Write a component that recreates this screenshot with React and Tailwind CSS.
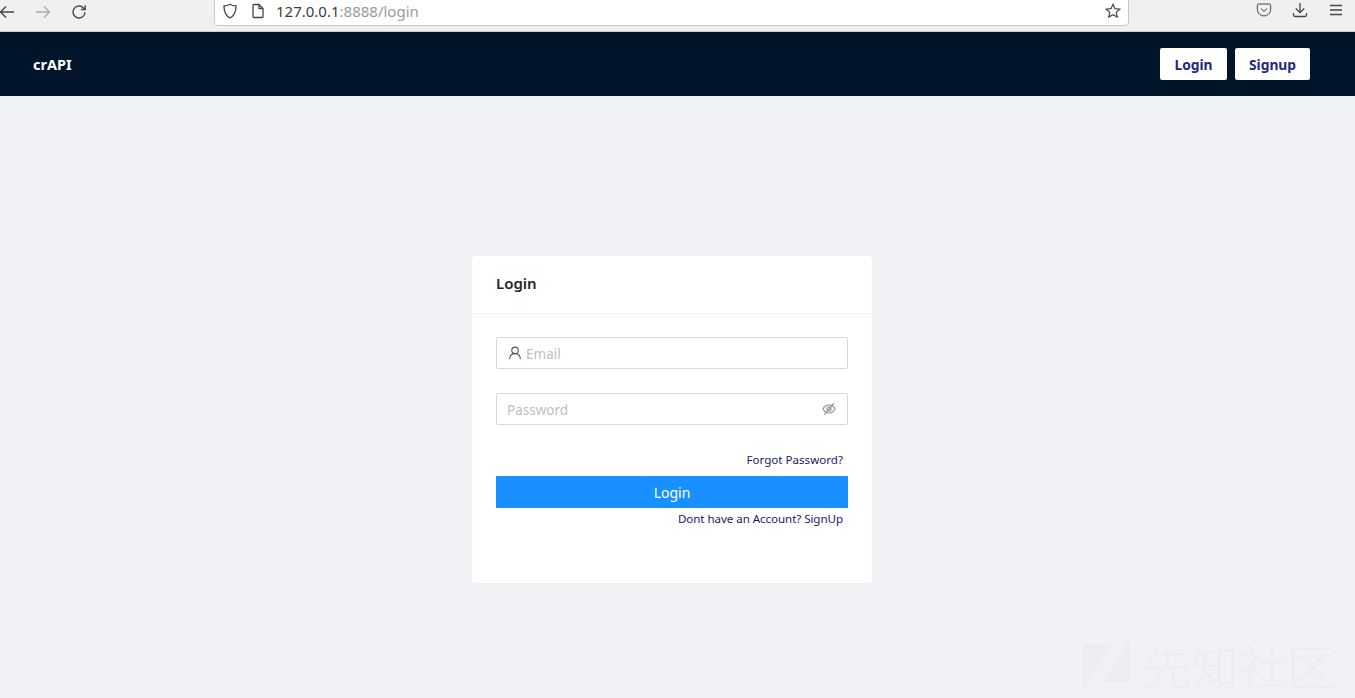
import { Pocket } from 'lucide-react';

const UI_FONT = "font-['Noto_Sans','Open_Sans',sans-serif]";

function BackIcon({ className }) {
  return (
    <svg viewBox="0 0 16 16" className={className} fill="none" stroke="currentColor" strokeWidth="1.3">
      <path d="M15 8H1.5M7 2.5 1.5 8 7 13.5" />
    </svg>
  );
}

function BrowserBar() {
  return (
    <div className="flex h-8 items-start overflow-hidden border-b border-[#cfcfcf] bg-[#f2f0ee]">
      <BackIcon className="ml-[-1px] mt-[4px] h-4 w-4 text-[#45454a]" />
      <BackIcon className="ml-[20px] mt-[4px] h-4 w-4 rotate-180 text-[#a9a9ab]" />
      <svg viewBox="0 0 16 16" className="ml-[20px] mt-[4px] h-4 w-4 text-[#45454a]" fill="none" stroke="currentColor" strokeWidth="1.4">
        <path d="M14 8.2A6 6 0 1 1 11.6 3.2L14 5.2" />
        <path d="M14.2 1.2v4.3H9.9" />
      </svg>
      <div className="ml-[127px] mt-[-6px] flex h-[32px] w-[915px] items-center rounded-[4px] border border-[#c9c9c9] bg-white pt-[2px]">
        <svg viewBox="0 0 16 16" className="ml-[7px] h-4 w-4 text-[#45454a]" fill="none" stroke="currentColor" strokeWidth="1.3">
          <path d="M8 1.2c2 1.2 4 1.6 6 1.7 0 6-1.6 9.7-6 11.9C3.6 12.600 2 8.900 2 2.900c2-.1 4-.5 6-1.700Z" />
        </svg>
        <svg viewBox="0 0 16 16" className="ml-[12px] h-4 w-4 text-[#45454a]" fill="none" stroke="currentColor" strokeWidth="1.3">
          <path d="M3 2.500a1 1 0 0 1 1-1h5l4 4v8a1 1 0 0 1-1 1H4a1 1 0 0 1-1-1Z" />
          <path d="M9 1.500v4h4" />
        </svg>
        <span className={`ml-[10px] text-[15px] leading-none text-[#9a9a9e] ${UI_FONT}`}>
          <span className="text-[#3c3c40]">127.0.0.1</span>:8888/login
        </span>
        <svg viewBox="0 0 16 16" className="ml-auto mr-[7px] h-4 w-4 text-[#45454a]" fill="none" stroke="currentColor" strokeWidth="1.2">
          <path d="M8 1.300 10 5.700l4.800.5-3.600 3.200 1 4.700L8 11.700l-4.200 2.400 1-4.700L1.200 6.200 6 5.700Z" />
        </svg>
      </div>
      <div className="ml-auto flex items-center pr-[11px] pt-[2px] text-[#45454a]">
        <Pocket className="h-4 w-4" strokeWidth={1.5} />
        <svg viewBox="0 0 16 16" className="ml-[20px] h-4 w-4" fill="none" stroke="currentColor" strokeWidth="1.3">
          <path d="M8 1v9.500M3.800 6.500 8 10.700l4.200-4.200M1.500 11v2a1.500 1.500 0 0 0 1.500 1.500h10a1.500 1.500 0 0 0 1.500-1.500v-2" />
        </svg>
        <svg viewBox="0 0 16 16" className="ml-[20px] h-4 w-4" fill="none" stroke="currentColor" strokeWidth="1.3">
          <path d="M2 3.500h12M2 8h12M2 12.500h12" />
        </svg>
      </div>
    </div>
  );
}

function NavBar() {
  return (
    <header className={`flex h-16 items-center justify-between bg-[#001529] pl-[33px] pr-[45px] ${UI_FONT}`}>
      <span className="pt-[2px] text-[14.5px] font-bold text-white">crAPI</span>
      <div className="flex gap-2">
        <button type="button" className="h-8 w-[67px] rounded-[2px] bg-white pt-[2px] text-[13.8px] font-bold text-[#232a7a]">Login</button>
        <button type="button" className="h-8 w-[75px] rounded-[2px] bg-white pt-[2px] text-[13.8px] font-bold text-[#232a7a]">Signup</button>
      </div>
    </header>
  );
}

function LoginCard() {
  return (
    <div className={`h-[327px] w-[400px] rounded-[4px] bg-white ${UI_FONT}`}>
      <div className="flex h-[58px] items-center border-b border-[#f0f0f0] px-6 pb-[2px] text-[15px] font-semibold text-[#262626]">
        Login
      </div>
      <div className="px-6 pt-[23px]">
        <div className="flex h-8 items-center rounded-[2px] border border-[#d9d9d9] pl-[11px] text-[13.5px] text-[#bfbfbf]">
          <svg viewBox="0 0 16 16" className="mr-[4px] h-[14px] w-[14px] text-[#555]" fill="none" stroke="currentColor" strokeWidth="1.200">
            <circle cx="8" cy="5" r="3.700" />
            <path d="M1.800 15c.3-3.800 2.800-6.300 6.200-6.300s5.900 2.500 6.200 6.300" />
          </svg>
          <span className="pt-[2px]">Email</span>
        </div>
        <div className="mt-6 flex h-8 items-center justify-between rounded-[2px] border border-[#d9d9d9] pl-[10px] pr-[11px] text-[13.5px] text-[#bfbfbf]">
          <span className="pt-[2px]">Password</span>
          <svg viewBox="0 0 16 16" className="h-[14px] w-[14px] text-[#8c8c8c]" fill="none" stroke="currentColor" strokeWidth="1.200">
            <path d="M1 8c1.800-3 4-4.500 7-4.500S13.200 5 15 8c-1.800 3-4 4.500-7 4.500S2.800 11 1 8Z" />
            <circle cx="8" cy="8" r="2.300" />
            <path d="M13.500 1.500 2.500 14.500" />
          </svg>
        </div>
        <div className="mt-[26px] pr-[5px] text-right text-[11.6px] leading-[18px] text-[#1c1a66]">Forgot Password?</div>
        <button type="button" className="mt-[7px] block h-8 w-full rounded-[1px] bg-[#1890ff] pt-[2px] text-sm text-white">Login</button>
        <div className="mt-[2px] pr-[5px] text-right text-[11.6px] leading-[18px] tracking-[-0.07px] text-[#1c1a66]">Dont have an Account? SignUp</div>
      </div>
    </div>
  );
}

function Watermark() {
  return (
    <div className="absolute bottom-[8px] right-[20px] flex items-center gap-[12px] text-[#ebedf0]">
      <svg viewBox="0 0 48 52" className="h-[52px] w-[48px]" fill="currentColor">
        <path d="M0 6h29L0 52Z" />
        <path d="M47 0v44H20Z" />
      </svg>
      <span className="font-['Noto_Sans_CJK_SC',sans-serif] text-[48px] font-light leading-none">先知社区</span>
    </div>
  );
}

export default function App() {
  return (
    <div className="relative flex h-[698px] flex-col overflow-hidden bg-[#f0f2f5]">
      <BrowserBar />
      <NavBar />
      <main className="flex flex-1 justify-center pr-[11px] pt-40">
        <LoginCard />
      </main>
      <Watermark />
    </div>
  );
}
